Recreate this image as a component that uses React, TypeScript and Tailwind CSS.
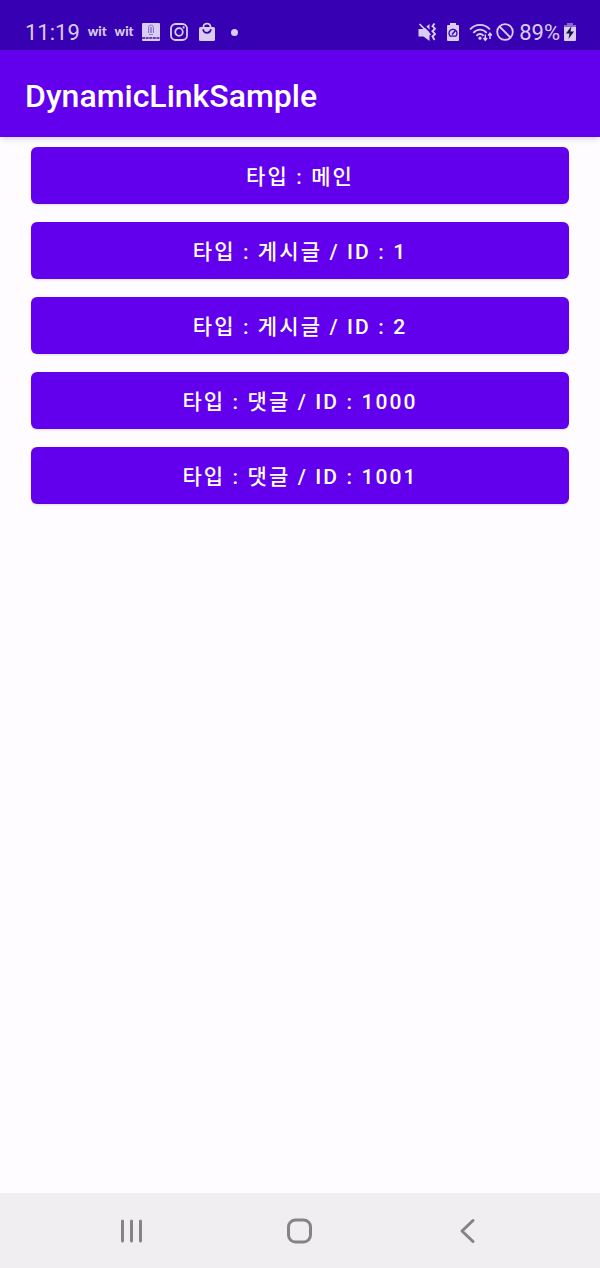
type LinkItem = {
  label: string;
  href: string;
};

const links: LinkItem[] = [
  { label: "타입 : 메인", href: "main" },
  { label: "타입 : 게시글 / ID : 1", href: "post/1" },
  { label: "타입 : 게시글 / ID : 2", href: "post/2" },
  { label: "타입 : 댓글 / ID : 1000", href: "comment/1000" },
  { label: "타입 : 댓글 / ID : 1001", href: "comment/1001" },
];

function AppNotificationIcon() {
  return (
    <svg className="h-5 w-5" viewBox="0 0 20 20" fill="none" aria-hidden="true">
      <rect x="1" y="1" width="18" height="18" rx="1" fill="currentColor" />
      <path d="M7.5 11V6a2.500 3 0 0 1 5 0v5M9.300 11V6a.7.7 0 0 1 1.400 0v5M8 12.500h4" stroke="#8a74d0" strokeWidth="1" />
      <path d="M1 16h18" stroke="#3a1a9c" strokeWidth="1.300" strokeDasharray="3 0.6" />
    </svg>
  );
}

function InstagramIcon() {
  return (
    <svg className="h-5 w-5" viewBox="0 0 20 20" fill="none" stroke="currentColor" strokeWidth="1.8" aria-hidden="true">
      <rect x="2" y="2" width="16" height="16" rx="4.5" />
      <circle cx="10" cy="10" r="3.8" />
      <circle cx="14.6" cy="5.4" r="1.1" fill="currentColor" stroke="none" />
    </svg>
  );
}

function BagIcon() {
  return (
    <svg className="h-5 w-5" viewBox="0 0 20 20" fill="none" aria-hidden="true">
      <path d="M6.5 7V4.8a3.5 3.2 0 0 1 7 0V7" stroke="currentColor" strokeWidth="1.8" />
      <path d="M2 6.5A1.5 1.5 0 0 1 3.5 5h13A1.5 1.5 0 0 1 18 6.5v11a1.5 1.5 0 0 1-1.5 1.5h-13A1.5 1.5 0 0 1 2 17.5z" fill="currentColor" />
      <path d="M6.2 7.2a3.8 3.6 0 0 0 7.6 0" stroke="#3700b3" strokeWidth="1.8" />
      <path d="M7.8 5V4.6a2.2 1.8 0 0 1 4.4 0V5z" fill="#3700b3" />
    </svg>
  );
}

function VibrateIcon() {
  return (
    <svg className="h-5 w-5" viewBox="0 0 20 20" fill="none" aria-hidden="true">
      <path d="M1.500 7h5l6-5v17l-6-4.500h-5z" fill="currentColor" />
      <path d="M4 0.500l9.500 9.500" stroke="#3700b3" strokeWidth="1.800" />
      <path d="M2.500 2l11 11" stroke="currentColor" strokeWidth="1.700" />
      <path d="M17.500 1.500l-2 2.600 2.500 2.600-2.500 2.600 2.500 2.600-2.500 2.600 2 3.500" stroke="currentColor" strokeWidth="1.900" />
    </svg>
  );
}

function BatterySaverIcon() {
  return (
    <svg className="h-5 w-4" viewBox="0 0 16 20" fill="none" aria-hidden="true">
      <path d="M5 1h6v2h2a1 1 0 0 1 1 1v14a1 1 0 0 1-1 1H3a1 1 0 0 1-1-1V4a1 1 0 0 1 1-1h2z" fill="currentColor" />
      <path d="M5.200 14.200a4 4 0 1 1 5.600 0z" stroke="#3700b3" strokeWidth="1.300" />
      <path d="M7 12.500l3.500-4" stroke="#3700b3" strokeWidth="1.500" />
    </svg>
  );
}

function WifiIcon() {
  return (
    <svg className="h-5 w-6" viewBox="0 0 24 20" fill="none" stroke="currentColor" aria-hidden="true">
      <path d="M1 7.500C6.500 1.200 15.500 1.200 21 7.500M4.300 10.800c4-4.300 9.500-4.300 13.400 0M7.500 13.800c2-2.400 5-2.400 7 0" strokeWidth="1.800" />
      <circle cx="11" cy="16.200" r="1.600" fill="currentColor" stroke="none" />
      <path d="M16.300 12.500v5.500M14.500 16l1.800 2.200 1.800-2.200M21 17v-5.500M19.200 13.500l1.800-2.200 1.800 2.200" strokeWidth="1.500" />
    </svg>
  );
}

function BlockIcon() {
  return (
    <svg className="h-5 w-5" viewBox="0 0 20 20" fill="none" stroke="currentColor" strokeWidth="1.800" aria-hidden="true">
      <circle cx="10" cy="10" r="7.800" />
      <path d="M4.500 4.500l11 11" />
    </svg>
  );
}

function BatteryIcon() {
  return (
    <svg className="h-5 w-4" viewBox="0 0 16 20" fill="none" aria-hidden="true">
      <path d="M5 1h6v2H5z" fill="currentColor" opacity="0.5" />
      <path d="M2 3h12v3H2z" fill="currentColor" opacity="0.5" />
      <path d="M2 5h12v13a1 1 0 0 1-1 1H3a1 1 0 0 1-1-1z" fill="currentColor" />
      <path d="M9.500 4L4 11.500h3.500L6.500 17l5.500-7.500H8.500z" fill="#1d0a4a" />
    </svg>
  );
}

function StatusBar() {
  return (
    <div className="flex h-[50px] items-end justify-between bg-[#3700b3] pr-[22px] pb-[5px] pl-[25px] text-[#d9cdf2]">
      <div className="flex items-center gap-2">
        <span className="pt-0.5 text-[22px] leading-6">11:19</span>
        <span className="font-[Lato] text-[13px] font-black">wit</span>
        <span className="font-[Lato] text-[13px] font-black">wit</span>
        <AppNotificationIcon />
        <InstagramIcon />
        <BagIcon />
        <span className="mx-1.5 h-[7px] w-[7px] rounded-full bg-current" />
      </div>
      <div className="flex items-center gap-1">
        <VibrateIcon />
        <span className="mx-1 flex">
          <BatterySaverIcon />
        </span>
        <div className="flex items-center gap-0.5">
          <WifiIcon />
          <BlockIcon />
        </div>
        <div className="flex items-center gap-0.5">
          <span className="pt-0.5 text-[22px] leading-6">89%</span>
          <BatteryIcon />
        </div>
      </div>
    </div>
  );
}

function NavigationBar() {
  return (
    <nav className="flex h-[75px] items-center justify-center gap-[120px] bg-[#f0eef1] text-[#858386]">
      <button type="button" aria-label="Recent apps" className="flex w-12 justify-center">
        <svg className="h-7 w-7" viewBox="0 0 28 28" fill="none" stroke="currentColor" strokeWidth="3" strokeLinecap="round" aria-hidden="true">
          <path d="M4.5 4v20M13.500 4v20M22.500 4v20" />
        </svg>
      </button>
      <button type="button" aria-label="Home" className="flex w-12 justify-center">
        <svg className="h-7 w-7" viewBox="0 0 28 28" fill="none" stroke="currentColor" strokeWidth="3" aria-hidden="true">
          <rect x="2.500" y="3" width="22" height="22" rx="7" />
        </svg>
      </button>
      <button type="button" aria-label="Back" className="flex w-12 justify-center">
        <svg className="h-7 w-7" viewBox="0 0 28 28" fill="none" stroke="currentColor" strokeWidth="3" strokeLinecap="round" strokeLinejoin="round" aria-hidden="true">
          <path d="M19 3.500L8 14l11 10.500" />
        </svg>
      </button>
    </nav>
  );
}

export default function App() {
  return (
    <div className="flex min-h-screen flex-col bg-[#fefcfe] font-[Roboto,'Noto_Sans_CJK_KR',sans-serif]">
      <StatusBar />
      <header className="flex h-[87px] items-center bg-[#6200ee] px-[25px] pt-1 text-white shadow-md">
        <h1 className="text-[32px] font-medium">DynamicLinkSample</h1>
      </header>
      <main className="flex flex-1 flex-col gap-[18px] px-[31px] pt-[10px]">
        {links.map((link) => (
          <button
            className="h-[57px] rounded-md bg-[#6200ee] pt-1 text-[21px] font-medium tracking-widest text-white shadow-sm"
            key={link.href}
            type="button"
          >
            {link.label}
          </button>
        ))}
      </main>
      <NavigationBar />
    </div>
  );
}
